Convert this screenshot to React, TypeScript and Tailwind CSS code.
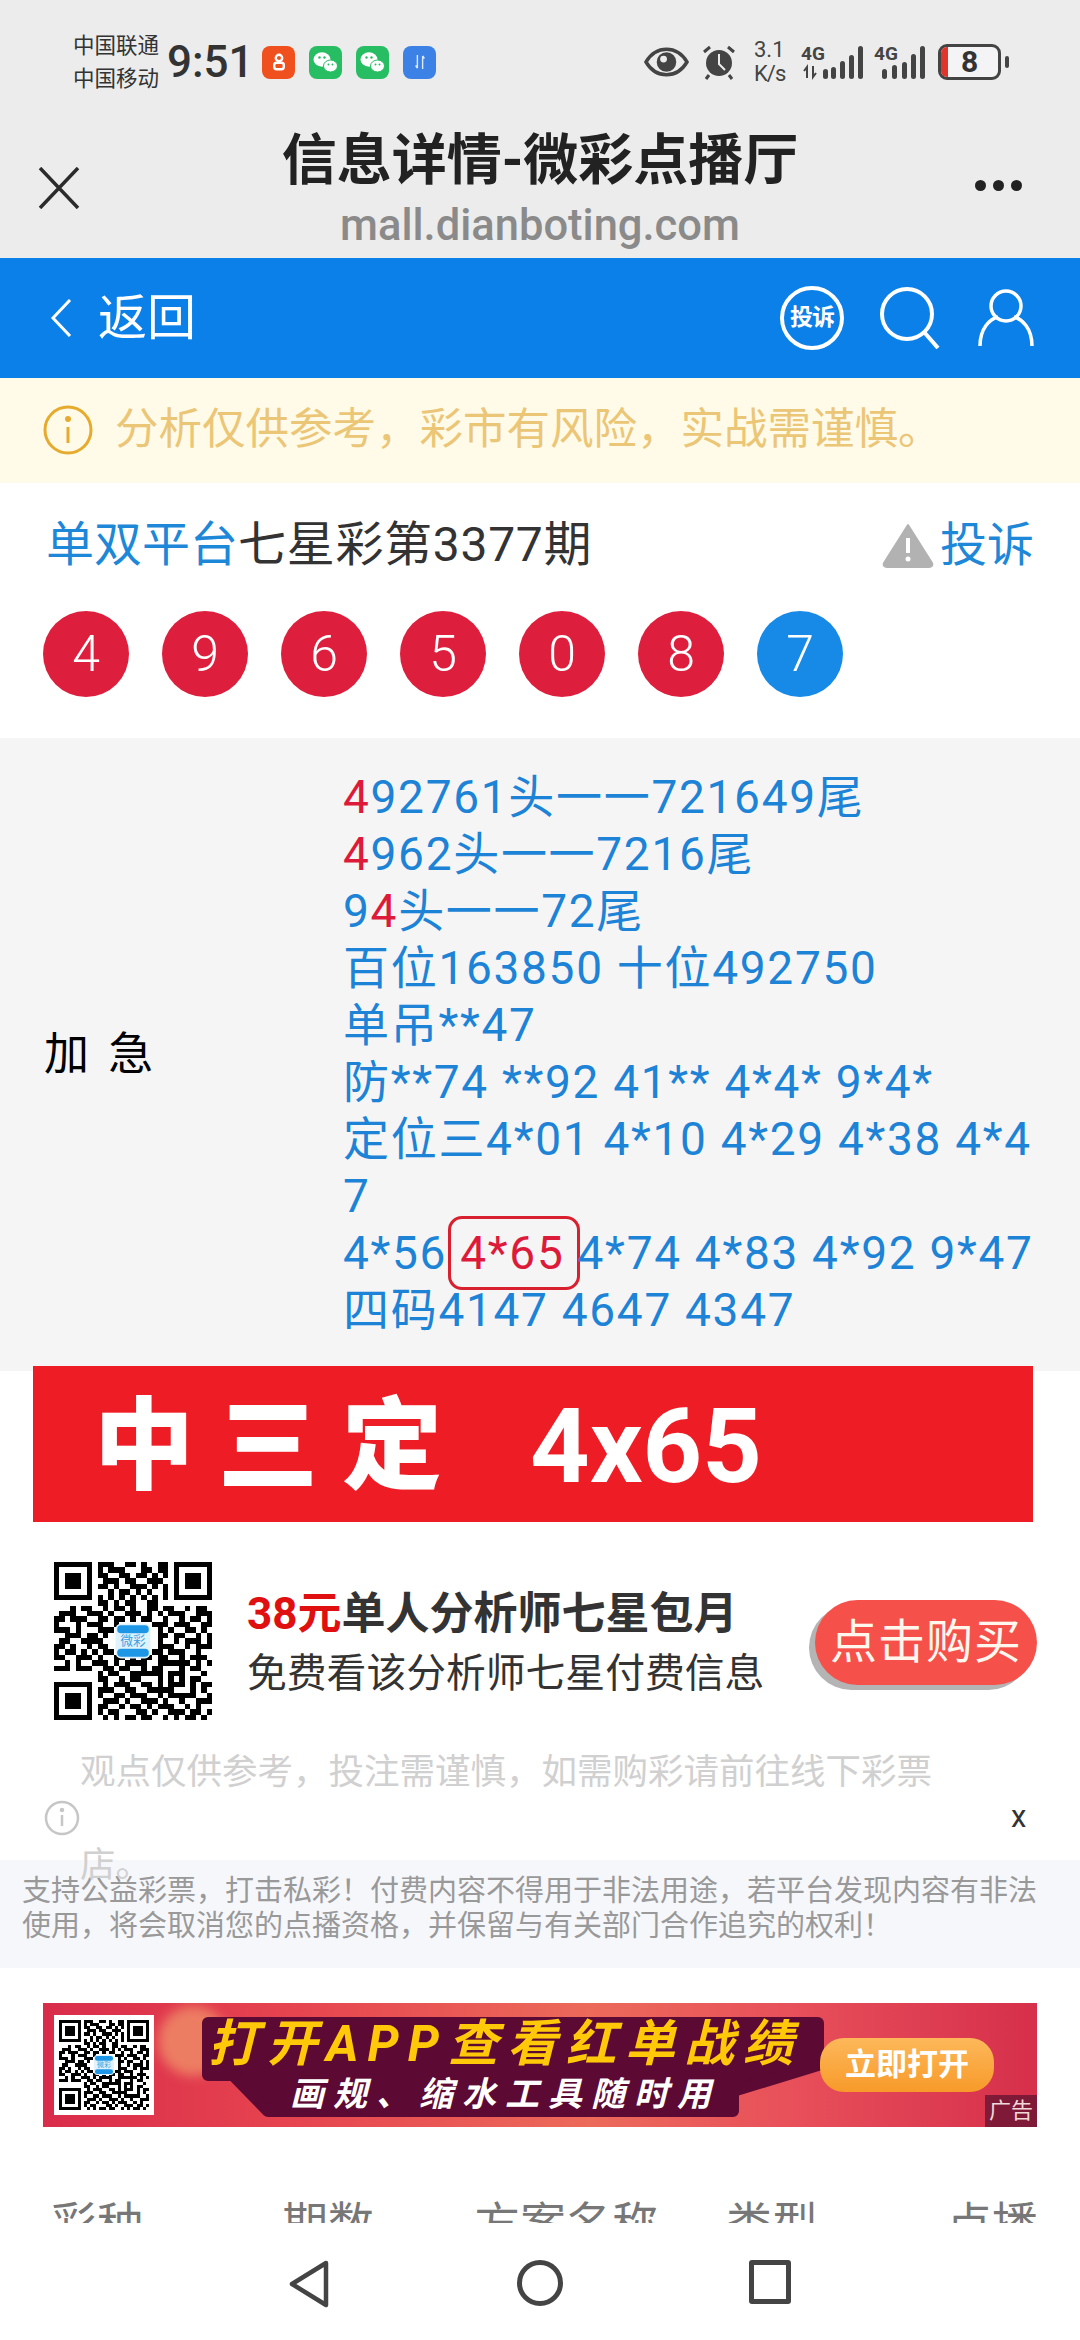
const balls = ["4", "9", "6", "5", "0", "8"];

const qrRows = [
  "11111110111001101001101111111",
  "10000010101110001101101000001",
  "10111010110011011010101011101",
  "10111010011101100111001011101",
  "10111010110100111010101011101",
  "10000010001011010100101000001",
  "11111110101010101010101111111",
  "00000000110101100110000000000",
  "00010110010110100110110010110",
  "01110011101001110101011100111",
  "11011100110110101100100101101",
  "10001011100100000011101110011",
  "11101000111000000001010011010",
  "00111011010000000001101100101",
  "01100111100000000001001011101",
  "11010010110000000001110010111",
  "10110101011000000011011100100",
  "11001110100110101101100101110",
  "00101001110101111001111110101",
  "11101110011011001011000101100",
  "00000000101100111111011100010",
  "00000000110010110001010101100",
  "11111110010111001101011101011",
  "10000010111001100111110001010",
  "10111010100110111001011111001",
  "10111010011101001110100100111",
  "10111010110010110101110010100",
  "10000010101100011010011101101",
  "11111110010101101100101011010",
];

function Qr({ className }: { className: string }) {
  return (
    <svg viewBox="0 0 29 29" className={className} shapeRendering="crispEdges">
      {qrRows.map((row, y) =>
        row.split("").map((c, x) => (c === "1" ? <rect key={x + "-" + y} x={x} y={y} width="1" height="1" fill="#000" /> : null))
      )}
      <g shapeRendering="auto">
        <rect x="11.3" y="11.3" width="6.4" height="6.4" rx="1" fill="#dff3fd" />
        <rect x="11.6" y="11.6" width="5.8" height="1.5" rx="0.7" fill="#1e96e6" />
        <rect x="11.6" y="15.9" width="5.8" height="1.5" rx="0.7" fill="#1e96e6" />
        <text x="14.5" y="15.3" fontSize="2.3" textAnchor="middle" fill="#3b9fe0">微彩</text>
      </g>
    </svg>
  );
}

function WeChat() {
  return (
    <div className="w-[33px] h-[33px] rounded-[8px] bg-[#27bd62] flex items-center justify-center">
      <svg viewBox="0 0 33 33" className="w-[33px] h-[33px]">
        <ellipse cx="13" cy="13.5" rx="8.5" ry="7.2" fill="#fff" />
        <ellipse cx="21.5" cy="20" rx="7" ry="6" fill="#fff" stroke="#27bd62" strokeWidth="1" />
        <circle cx="10.5" cy="11.5" r="1.2" fill="#27bd62" />
        <circle cx="15.5" cy="11.5" r="1.2" fill="#27bd62" />
        <circle cx="19.5" cy="18.5" r="1" fill="#27bd62" />
        <circle cx="23.5" cy="18.5" r="1" fill="#27bd62" />
      </svg>
    </div>
  );
}

function SignalOne() {
  const xs = [22, 30, 39, 48, 57];
  const hs = [10, 12, 18, 24, 33];
  return (
    <svg viewBox="0 0 62 36" className="w-[62px] h-[36px]" fill="#444">
      <text x="0" y="16" fontSize="19" fontWeight="700" fontFamily="Roboto, sans-serif">4G</text>
      <path d="M6 34V23l-3 4M12 22v11l3-4" fill="none" stroke="#444" strokeWidth="2" />
      {xs.map((x, i) => (
        <rect key={x} x={x} y={35 - hs[i]} width="5" height={hs[i]} rx="2.5" />
      ))}
    </svg>
  );
}

function SignalTwo() {
  const xs = [8, 18, 28, 37, 46];
  const hs = [10, 14, 17, 25, 33];
  return (
    <svg viewBox="0 0 52 36" className="w-[52px] h-[36px]" fill="#444">
      <text x="0" y="16" fontSize="19" fontWeight="700" fontFamily="Roboto, sans-serif">4G</text>
      {xs.map((x, i) => (
        <rect key={x} x={x} y={35 - hs[i]} width="5" height={hs[i]} rx="2.5" />
      ))}
    </svg>
  );
}

function StatusBar() {
  return (
    <div className="flex items-center h-[66px] mt-[29px] pl-[73px] pr-[71px] justify-between text-[#333]">
      <div className="flex items-center">
        <div className="text-[21.5px] leading-[33px] w-[94px]">
          <div>中国联通</div>
          <div>中国移动</div>
        </div>
        <div className="text-[44px] font-medium w-[95px] leading-none">9:51</div>
        <div className="flex gap-[14px]">
          <div className="w-[33px] h-[33px] rounded-[8px] bg-[#f0501e] flex items-center justify-center">
            <svg viewBox="0 0 20 24" className="w-[16px] h-[24px]" fill="none" stroke="#fff" strokeWidth="3">
              <circle cx="10" cy="7" r="4" />
              <rect x="4" y="13" width="12" height="8" rx="3" />
            </svg>
          </div>
          <WeChat />
          <WeChat />
          <div className="w-[33px] h-[33px] rounded-[8px] bg-[#3c82e6] flex items-center justify-center">
            <svg viewBox="0 0 16 20" className="w-[14px] h-[18px]" fill="none" stroke="#dce9fb" strokeWidth="1.6">
              <path d="M5 2v15M5 17l-2-3M11 18V3M11 3l2 3" />
            </svg>
          </div>
        </div>
      </div>
      <div className="flex items-center">
        <svg viewBox="0 0 46 32" className="w-[45px] h-[32px] mr-[12px]">
          <path d="M2 16C8 6 15 3 23 3s15 3 21 13c-6 10-13 13-21 13S8 26 2 16z" fill="none" stroke="#444" strokeWidth="3.5" />
          <circle cx="23" cy="16" r="10" fill="#444" />
          <circle cx="20" cy="13" r="3.5" fill="#ececec" />
        </svg>
        <svg viewBox="0 0 36 36" className="w-[36px] h-[36px] mr-[17px]">
          <circle cx="18" cy="19" r="13" fill="#444" />
          <path d="M18 10v10l6 6" fill="none" stroke="#ececec" strokeWidth="2" />
          <path d="M3 8l6-5M33 8l-6-5M8 31l-3 4M28 31l3 4" stroke="#444" strokeWidth="3" />
        </svg>
        <div className="w-[47px] text-[22px] leading-[24px] text-[#444]">
          <div>3.1</div>
          <div className="tracking-[-1px]">K/s</div>
        </div>
        <SignalOne />
        <div className="w-[11px]" />
        <SignalTwo />
        <div className="w-[12px]" />
        <div className="w-[63px] h-[36px] rounded-[9px] border-[3px] border-[#444] bg-[#f4f4f6] flex overflow-hidden relative">
          <div className="w-[7px] bg-[#e0352b]" />
          <div className="flex-1 text-center text-[30px] font-bold leading-[30px] text-[#333]">8</div>
          <div className="w-[7px]" />
        </div>
        <div className="w-[4px] h-[12px] ml-[4px] rounded-full bg-[#444]" />
      </div>
    </div>
  );
}

function Browser() {
  return (
    <div className="h-[258px] bg-[#ececec] flex flex-col">
      <StatusBar />
      <div className="flex items-start pl-[38px] pr-[58px] mt-[33px]">
        <div className="w-[67px]">
          <svg viewBox="0 0 42 42" className="w-[42px] h-[42px] mt-[39px]" fill="none" stroke="#2b2b2b" strokeWidth="3.5">
            <path d="M2 1l38 40M40 1L2 41" />
          </svg>
        </div>
        <div className="flex-1 text-center">
          <div className="text-[55px] leading-[64px] font-bold text-[#222]">信息详情-微彩点播厅</div>
          <div className="text-[43.5px] leading-[58px] mt-[5px] font-medium text-[#8a8a8a]">mall.dianboting.com</div>
        </div>
        <div className="w-[47px] flex gap-[7px] mt-[52px]">
          <div className="shrink-0 w-[11px] h-[11px] rounded-full bg-[#222]" />
          <div className="shrink-0 w-[11px] h-[11px] rounded-full bg-[#222]" />
          <div className="shrink-0 w-[11px] h-[11px] rounded-full bg-[#222]" />
        </div>
      </div>
    </div>
  );
}

function BlueBar() {
  return (
    <div className="h-[120px] bg-[#0a80e8] flex items-center pl-[50px] pr-[46px] text-white">
      <svg viewBox="0 0 22 38" className="w-[22px] h-[38px] mr-[26px]" fill="none" stroke="#fff" strokeWidth="3">
        <path d="M20 1L3 19l17 18" />
      </svg>
      <div className="text-[49px] leading-none flex-1">返回</div>
      <div className="w-[64px] h-[64px] rounded-full border-[4px] border-white flex items-center justify-center text-[23px] font-bold mr-[36px] tracking-[-1px]">投诉</div>
      <svg viewBox="0 0 60 62" className="w-[60px] h-[62px] mr-[38px]" fill="none" stroke="#fff" strokeWidth="4">
        <circle cx="27" cy="27" r="25" />
        <path d="M44 45l14 16" />
      </svg>
      <svg viewBox="0 0 56 60" className="w-[56px] h-[60px]" fill="none" stroke="#fff" strokeWidth="3.5">
        <circle cx="28" cy="18" r="15" />
        <path d="M2 58c0-18 10-27 18-29M54 58c0-18-10-27-18-29" />
      </svg>
    </div>
  );
}

function Notice() {
  return (
    <div className="h-[105px] bg-[#fffbe8] flex items-center pl-[43px] pb-[2px] text-[#ebc677]">
      <svg viewBox="0 0 50 50" className="w-[50px] h-[50px] mr-[22px]" fill="none" stroke="#e6ab2e" strokeWidth="3">
        <circle cx="25" cy="25" r="23" />
        <path d="M25 22v16" />
        <circle cx="25" cy="14" r="1.5" fill="#e6ab2e" />
      </svg>
      <span className="text-[43.5px] leading-none">分析仅供参考，彩市有风险，实战需谨慎。</span>
    </div>
  );
}

function Draw() {
  return (
    <div className="h-[255px] bg-white">
      <div className="flex items-center justify-between pl-[46px] pr-[46px] pt-[33px]">
        <div className="text-[48px] leading-[58px] text-[#333]">
          <span className="text-[#1d88d8]">单双平台</span>
          <span className="tracking-[0.7px]">七星彩第3377期</span>
        </div>
        <div className="flex items-center text-[47px] leading-[58px] text-[#1d88d8]">
          <svg viewBox="0 0 54 46" className="w-[54px] h-[46px] mr-[5px]">
            <path d="M27 3L3 41c-1 2 0 4 3 4h42c3 0 4-2 3-4z" fill="#b2b2b2" stroke="#b2b2b2" strokeWidth="2" strokeLinejoin="round" />
            <rect x="25" y="16" width="4" height="15" fill="#fff" />
            <circle cx="27" cy="37" r="2.5" fill="#fff" />
          </svg>
          投诉
        </div>
      </div>
      <div className="flex gap-[33px] pl-[43px] mt-[37px]">
        {balls.map((b, i) => (
          <div key={i} className="w-[86px] h-[86px] rounded-full bg-[#dd1f3d] text-white flex items-center justify-center text-[50px] font-light">{b}</div>
        ))}
        <div className="w-[86px] h-[86px] rounded-full bg-[#168ae6] text-white flex items-center justify-center text-[50px] font-light">7</div>
      </div>
    </div>
  );
}

function Plan() {
  const red = "text-[#dd1a3a]";
  return (
    <div className="h-[633px] bg-[#f5f5f6] flex">
      <div className="w-[343px] pl-[44px] flex items-center text-[45px] text-black tracking-[4px]">加 急</div>
      <div className="w-[700px] pt-[31px] text-[46px] leading-[57px] text-[#1c83d6] tracking-[1.7px] break-all">
        <div><span className={red}>4</span>92761头一一721649尾</div>
        <div><span className={red}>4</span>962头一一7216尾</div>
        <div>9<span className={red}>4</span>头一一72尾</div>
        <div>百位163850 十位492750</div>
        <div>单吊**47</div>
        <div>防**74 **92 41** 4*4* 9*4*</div>
        <div>定位三4*01 4*10 4*29 4*38 4*47</div>
        <div>
          4*56 <span className="text-[#dd1a3a] border-[3px] border-[#d8202f] rounded-[14px] pl-[9px] pr-[13px] py-[7px] ml-[-12px] mr-[-16px]">4*65</span> 4*74 4*83 4*92 9*47
        </div>
        <div>四码4147 4647 4347</div>
      </div>
    </div>
  );
}

function Buy() {
  return (
    <div className="flex items-start pl-[54px] pr-[43px] mt-[40px]">
      <Qr className="w-[158px] h-[158px] shrink-0" />
      <div className="ml-[35px] flex-1 pt-[22px]">
        <div className="text-[44px] leading-[60px] font-bold text-[#333] whitespace-nowrap">
          <span className="text-[#e01010]">38元</span>单人分析师七星包月
        </div>
        <div className="text-[39.8px] leading-[60px] text-[#333] whitespace-nowrap">免费看该分析师七星付费信息</div>
      </div>
      <div className="w-[222px] h-[85px] mt-[38px] rounded-full bg-[#f5504a] shadow-[-6px_5px_0_#b4b4b4] text-[#fff6ee] text-[47px] flex items-center justify-center shrink-0 tracking-[1px]">点击购买</div>
    </div>
  );
}

function Tip() {
  return (
    <div className="relative h-[140px] mt-[6px]">
      <div className="pl-[80px] pr-[140px] text-[35.5px] leading-[93px] text-[#d0d0d0]">观点仅供参考，投注需谨慎，如需购彩请前往线下彩票店。</div>
      <svg viewBox="0 0 36 36" className="absolute left-[44px] top-[74px] w-[36px] h-[36px]" fill="none" stroke="#c6c6c6" strokeWidth="2.5">
        <circle cx="18" cy="18" r="16" />
        <path d="M18 15v11" />
        <circle cx="18" cy="10" r="1" fill="#c6c6c6" />
      </svg>
      <div className="absolute left-[1011px] top-[71px] text-[31px] text-[#333] leading-[40px]">x</div>
    </div>
  );
}

function AdBanner() {
  return (
    <div className="relative mx-[43px] mt-[35px] h-[124px] overflow-hidden flex items-center bg-[linear-gradient(90deg,#d92c4b_0%,#e6444f_25%,#ec6a5a_55%,#e8505a_75%,#d62f4b_100%)]">
      <div className="absolute left-[115px] top-[3px] w-[70px] h-[70px] rounded-full bg-[#f29a6c] opacity-70 blur-[6px]" />
      <svg viewBox="0 0 994 124" className="absolute left-0 top-0 w-[994px] h-[124px]">
        <path d="M165 20H775V62L690 88V108H225L190 72H165z" fill="#5c0a33" stroke="#5c0a33" strokeWidth="12" strokeLinejoin="round" />
      </svg>
      <div className="relative ml-[11px] w-[100px] h-[100px] bg-white p-[5px] shrink-0">
        <Qr className="w-[90px] h-[90px]" />
      </div>
      <div className="relative w-[666px] pl-[36px] text-center font-bold italic">
        <div className="text-[50px] leading-[58px] text-[#ffc90a] tracking-[9px] whitespace-nowrap">打开APP查看红单战绩</div>
        <div className="text-[34px] leading-[42px] text-white tracking-[9px] whitespace-nowrap">画规、缩水工具随时用</div>
      </div>
      <div className="relative w-[174px] h-[54px] rounded-[24px] bg-[linear-gradient(180deg,#fdb85a,#f79a2a)] text-white text-[31px] font-bold flex items-center justify-center shrink-0">立即打开</div>
      <div className="absolute right-0 bottom-0 w-[52px] h-[32px] bg-[#6e1534]/85 text-[#f2d8d8] text-[22px] leading-[32px] text-center">广告</div>
    </div>
  );
}

function TableHead() {
  return (
    <div className="flex mt-[69px] text-[46px] leading-[56px] text-[#777]">
      <div className="ml-[51px] w-[231px]">彩种</div>
      <div className="w-[192px]">期数</div>
      <div className="w-[252px]">方案名称</div>
      <div className="w-[220px]">类型</div>
      <div>点播</div>
    </div>
  );
}

function NavBar() {
  return (
    <div className="h-[117px] bg-white flex items-start pt-[37px]">
      <div className="w-[288px]" />
      <svg viewBox="0 0 42 48" className="w-[42px] h-[48px]" fill="none" stroke="#444" strokeWidth="4.5" strokeLinejoin="round">
        <path d="M38 3L4 24l34 21z" />
      </svg>
      <div className="w-[187px]" />
      <div className="w-[46px] h-[46px] rounded-full border-[5px] border-[#444]" />
      <div className="w-[186px]" />
      <div className="w-[42px] h-[44px] rounded-[3px] border-[5px] border-[#444]" />
    </div>
  );
}

export default function App() {
  return (
    <div className="w-[1080px] h-[2340px] overflow-hidden bg-white flex flex-col font-['Roboto','Noto_Sans_CJK_SC',sans-serif]">
      <Browser />
      <BlueBar />
      <Notice />
      <Draw />
      <div className="h-[1485px] shrink-0 overflow-hidden">
        <Plan />
        <div className="ml-[33px] mr-[47px] -mt-[5px] h-[156px] bg-[#ee1c25] text-white font-black flex items-center pl-[61px] pt-[6px] text-[100px] whitespace-nowrap relative">
          <span className="tracking-[24px]">中三定</span>
          <span className="ml-[64px] font-bold text-[104px]">4x65</span>
        </div>
        <Buy />
        <Tip />
        <div className="h-[108px] bg-[#f6f7fb] px-[22px] pt-[14px] text-[29px] leading-[35px] text-[#999] -mt-[6px]">
          支持公益彩票，打击私彩！付费内容不得用于非法用途，若平台发现内容有非法使用，将会取消您的点播资格，并保留与有关部门合作追究的权利！
        </div>
        <AdBanner />
        <TableHead />
      </div>
      <NavBar />
    </div>
  );
}
